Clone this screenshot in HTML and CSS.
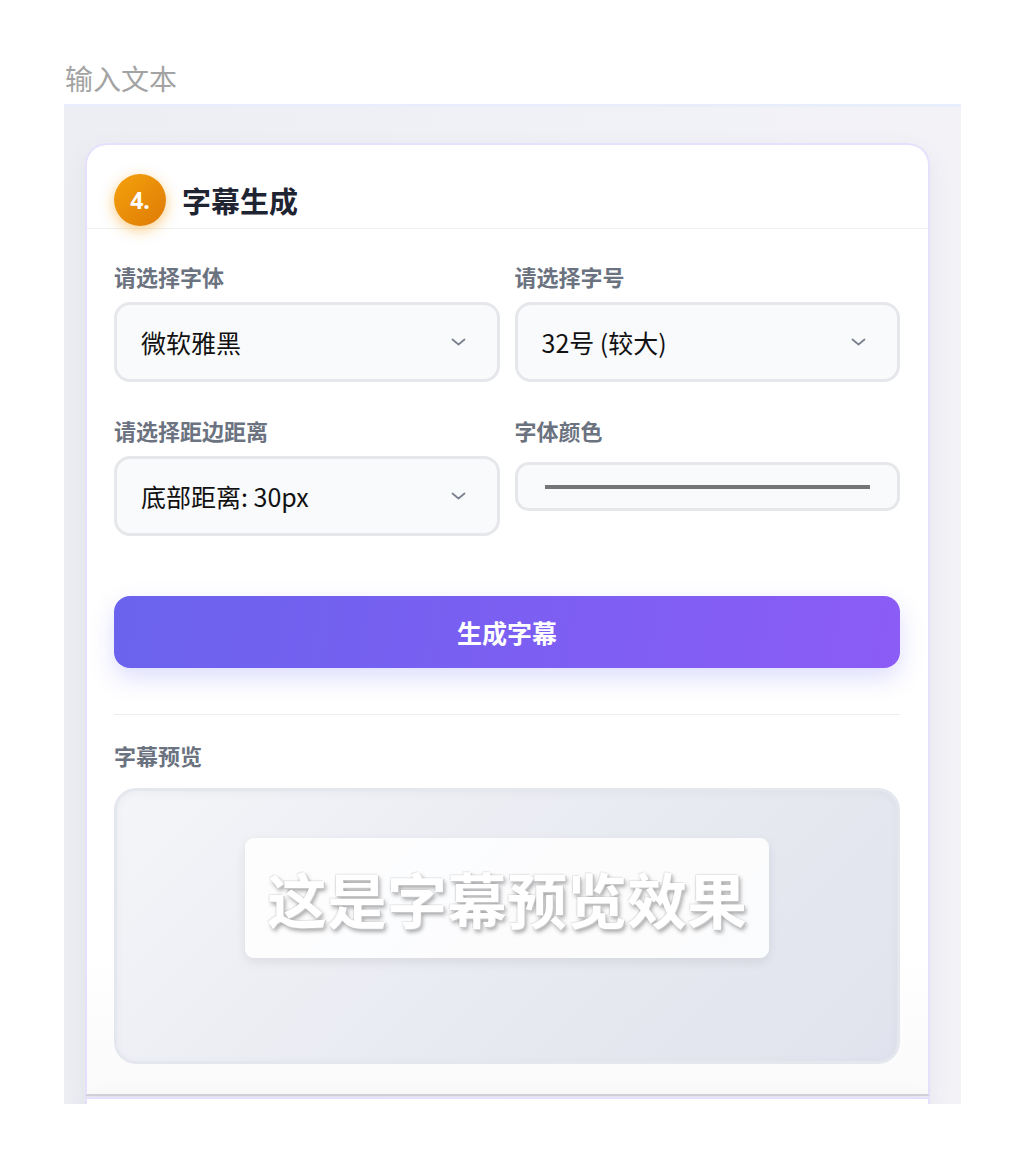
FILE: index.html
```html
<!DOCTYPE html>
<html lang="zh-CN">
<head>
<meta charset="utf-8">
<title>字幕生成</title>
<link rel="stylesheet" href="styles.css">
</head>
<body>
<div class="page">
  <div class="page-title">输入文本</div>
  <div class="panel">
    <section class="card">
      <header class="card-head">
        <span class="badge">4.</span>
        <h2 class="card-title">字幕生成</h2>
      </header>
      <div class="card-body">
        <div class="form-grid">
          <div class="field">
            <label class="label">请选择字体</label>
            <div class="select">
              <span>微软雅黑</span>
              <svg class="chev" width="15" height="8" viewBox="0 0 15 8"><path d="M1.5 1.5 L7.5 6.5 L13.5 1.5" fill="none" stroke="#7b8190" stroke-width="1.8" stroke-linecap="round" stroke-linejoin="round"/></svg>
            </div>
          </div>
          <div class="field">
            <label class="label">请选择字号</label>
            <div class="select">
              <span>32号 (较大)</span>
              <svg class="chev" width="15" height="8" viewBox="0 0 15 8"><path d="M1.5 1.5 L7.5 6.5 L13.5 1.5" fill="none" stroke="#7b8190" stroke-width="1.8" stroke-linecap="round" stroke-linejoin="round"/></svg>
            </div>
          </div>
          <div class="field">
            <label class="label">请选择距边距离</label>
            <div class="select">
              <span>底部距离: 30px</span>
              <svg class="chev" width="15" height="8" viewBox="0 0 15 8"><path d="M1.5 1.5 L7.5 6.5 L13.5 1.5" fill="none" stroke="#7b8190" stroke-width="1.8" stroke-linecap="round" stroke-linejoin="round"/></svg>
            </div>
          </div>
          <div class="field">
            <label class="label">字体颜色</label>
            <div class="color-input"><div class="swatch"></div></div>
          </div>
        </div>
        <button class="btn" type="button">生成字幕</button>
        <div class="preview-section">
          <div class="label">字幕预览</div>
          <div class="preview">
            <div class="subtitle">这是字幕预览效果</div>
          </div>
        </div>
      </div>
    </section>
    <div class="card next"></div>
  </div>
</div>
</body>
</html>
```

FILE: styles.css
```css
* { box-sizing: border-box; }

html, body {
  margin: 0;
  padding: 0;
  background: #ffffff;
}

body {
  font-family: "Noto Sans CJK SC", "Noto Sans", sans-serif;
  color: #1f2937;
}

.page {
  padding: 58px 65px 0 64px;
}

.page-title {
  font-size: 28px;
  line-height: 40px;
  color: #a3a3a3;
  padding-left: 1px;
  margin-bottom: 6px;
}

.panel {
  width: 897px;
  height: 1000px;
  overflow: hidden;
  border-top: 3px solid #e8eefb;
  background: linear-gradient(90deg, #eceef3 0%, #f0f1f6 50%, #f2f2f7 100%);
  padding: 36px 31px 0 21px;
}

.card {
  background: linear-gradient(180deg, #ffffff 0%, #ffffff 85%, #fafafa 100%);
  border: 2px solid #e7e0fc;
  border-bottom-color: #d2d2d8;
  border-radius: 22px 22px 0 0;
  box-shadow: 0 8px 24px rgba(90, 90, 130, 0.08);
  height: 953px;
}

.card.next {
  height: 40px;
  margin-top: 1px;
  border-bottom: none;
  border-radius: 0;
  background: #ffffff;
}

.card-head {
  display: flex;
  gap: 16px;
  height: 84px;
  padding: 29px 27px 0 27px;
  border-bottom: 1px solid #eef0f3;
  align-items: flex-start;
}

.badge {
  width: 52px;
  height: 52px;
  border-radius: 50%;
  background: linear-gradient(135deg, #f5a20c 0%, #de7a06 100%);
  box-shadow: 0 4px 14px rgba(245, 158, 11, 0.5);
  color: #ffffff;
  font-family: "Noto Sans", "Liberation Sans", sans-serif;
  font-weight: 700;
  font-size: 23px;
  display: flex;
  align-items: center;
  justify-content: center;
  flex: none;
}

.card-title {
  margin: 0;
  font-size: 29px;
  line-height: 52px;
  font-weight: 700;
  color: #1f2433;
}

.card-body {
  padding: 31px 28px 0 27px;
}

.form-grid {
  display: grid;
  grid-template-columns: 1fr 1fr;
  column-gap: 15px;
  row-gap: 32px;
}

.field {
  display: flex;
  flex-direction: column;
}

.label {
  display: block;
  font-size: 22px;
  line-height: 33px;
  font-weight: 700;
  color: #6b7280;
}

.select {
  margin-top: 9px;
  height: 80px;
  border: 3px solid #e5e7eb;
  border-radius: 16px;
  background: #f9fafb;
  display: flex;
  align-items: center;
  justify-content: space-between;
  padding: 0 31px 0 24px;
  font-size: 25px;
  color: #111111;
}

.chev { display: block; }

.color-input {
  margin-top: 15px;
  height: 49px;
  border: 3px solid #e5e7eb;
  border-radius: 14px;
  background: #f9fafb;
  display: flex;
  align-items: center;
  padding: 0 27px;
}

.swatch {
  flex: 1;
  height: 4px;
  background: #757575;
}

.btn {
  display: block;
  width: 100%;
  margin-top: 60px;
  height: 72px;
  border: none;
  border-radius: 16px;
  background: linear-gradient(100deg, #6a63ee 0%, #7b5ff2 50%, #8b5cf6 100%);
  box-shadow: 0 10px 24px rgba(99, 102, 241, 0.22);
  color: #ffffff;
  font-family: "Noto Sans CJK SC", sans-serif;
  font-size: 25px;
  font-weight: 700;
}

.preview-section {
  margin-top: 46px;
  border-top: 1px solid #eceef2;
  padding-top: 24px;
}

.preview {
  margin-top: 16px;
  height: 276px;
  border: 3px solid #e4e7ee;
  border-radius: 22px;
  background: linear-gradient(135deg, #f4f5f8 0%, #e9ebf2 50%, #e0e3ed 100%);
  box-shadow: inset 0 2px 8px rgba(0, 0, 0, 0.04);
  display: flex;
  justify-content: center;
  align-items: flex-start;
  padding-top: 47px;
}

.subtitle {
  background: rgba(255, 255, 255, 0.85);
  border-radius: 9px;
  box-shadow: 0 4px 12px rgba(0, 0, 0, 0.08);
  padding: 22px 22px;
  font-size: 60px;
  line-height: 76px;
  font-weight: 700;
  color: #ffffff;
  white-space: nowrap;
  text-shadow: 1px 1px 0 #c8c8cc, 2px 3px 4px rgba(0, 0, 0, 0.35), -1px -1px 1px rgba(0, 0, 0, 0.08);
}
```
